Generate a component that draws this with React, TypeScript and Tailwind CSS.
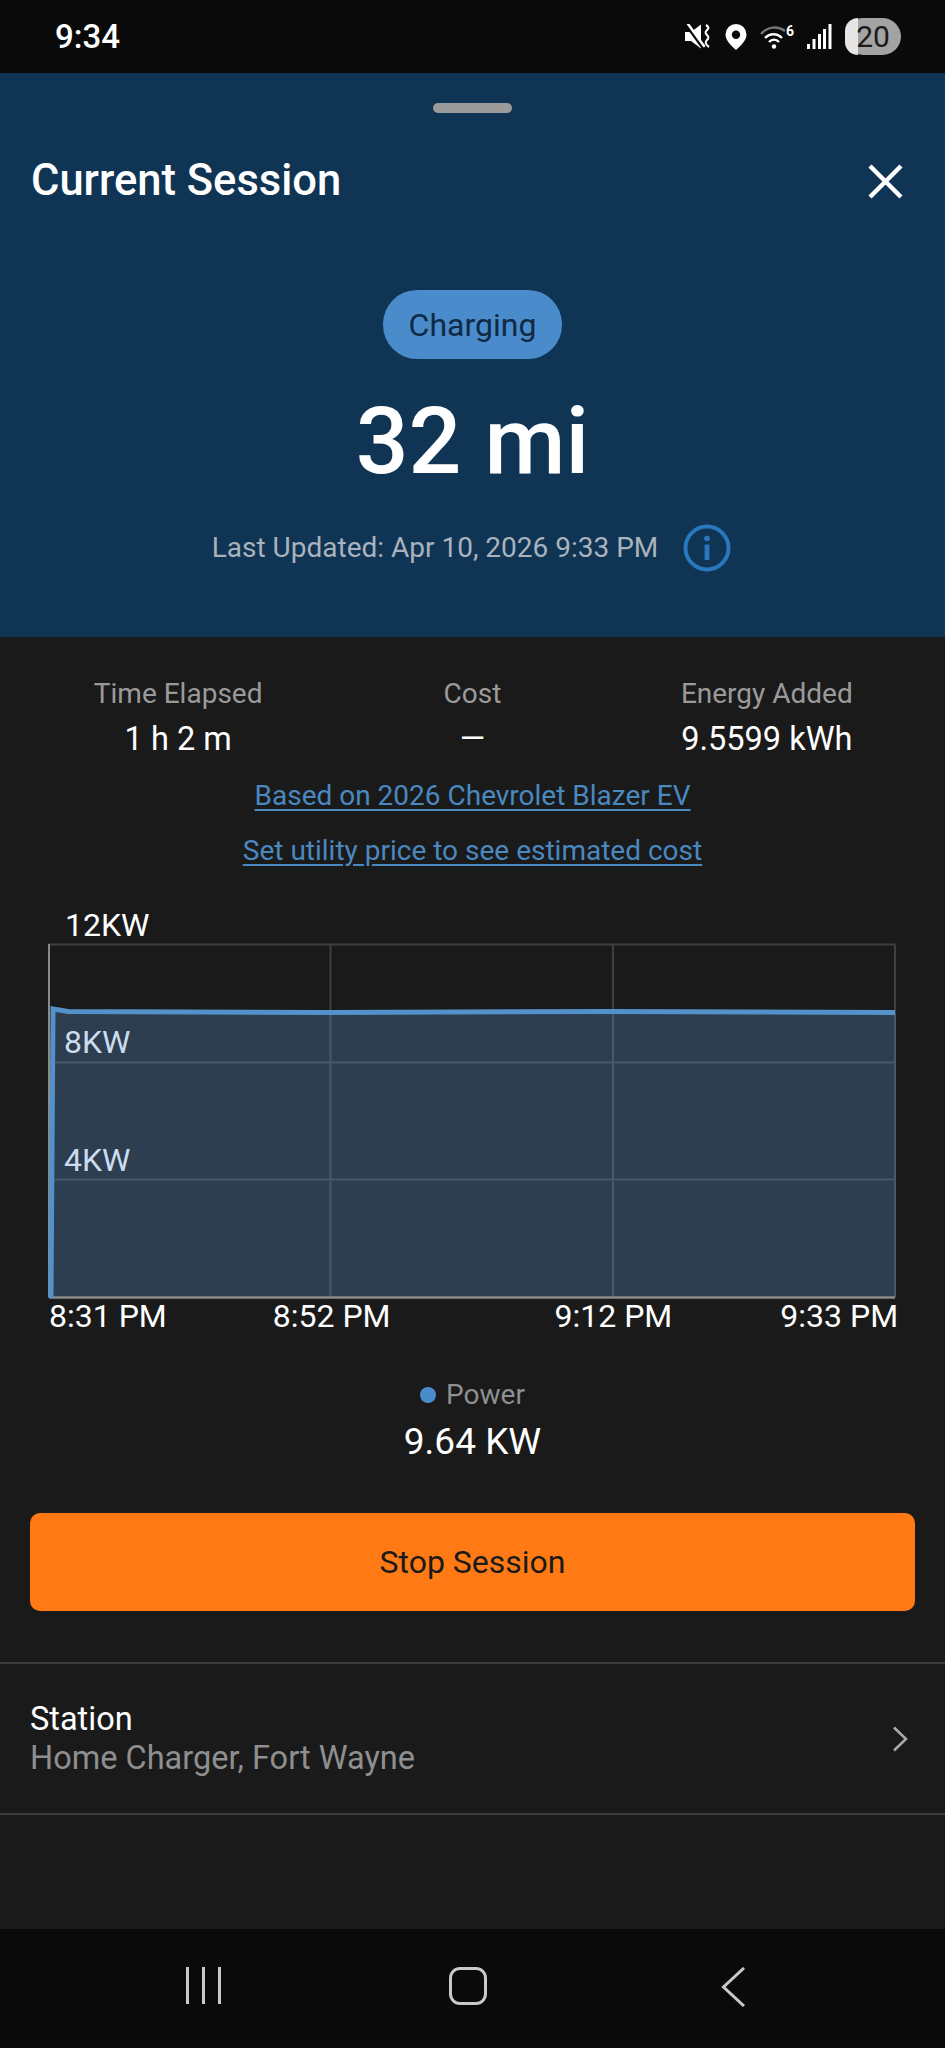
function MuteIcon() {
  return (
    <svg width="27" height="25" viewBox="0 0 27 25" fill="none">
      <path d="M0 8h6l10-7.500v24L6 17H0z" fill="#fff" />
      <path d="M1 1l16 22" stroke="#0a0a0a" strokeWidth="2.500" />
      <path d="M3 0l16 22" stroke="#fff" strokeWidth="2.400" strokeLinecap="round" />
      <path d="M21 1c3 2 3 3 1 5s-2 3 0 5 2 3 0 5-2 4 2 7" stroke="#fff" strokeWidth="2.200" />
    </svg>
  );
}

function PinIcon() {
  return (
    <svg width="22" height="26" viewBox="0 0 22 26">
      <path fillRule="evenodd" d="M11 0a10.500 10.500 0 0 1 10.500 10.500c0 6-5.500 11-10.500 15.500C6 21.500.5 16.500.5 10.500A10.500 10.500 0 0 1 11 0zm0 6.500a4.200 4.200 0 1 0 0 8.400 4.200 4.200 0 0 0 0-8.400z" fill="#fff" />
    </svg>
  );
}

function WifiIcon() {
  return (
    <div className="relative w-[34px] h-[24px]">
      <svg width="28" height="24" viewBox="0 0 28 24" fill="none">
        <path d="M1 9C8 1 18 1 25 6" stroke="#777" strokeWidth="2.400" />
        <path d="M5 13c5-5 12-5 17 0" stroke="#fff" strokeWidth="2.400" />
        <path d="M9 17c3-3 7-3 10 0" stroke="#fff" strokeWidth="2.400" />
        <circle cx="14" cy="21.500" r="2.200" fill="#fff" />
      </svg>
      <span className="absolute right-0 top-[-1px] text-[14px] font-bold leading-[14px]">6</span>
    </div>
  );
}

function SignalIcon() {
  return (
    <svg width="25" height="25" viewBox="0 0 25 25" fill="#fff">
      <rect x="0" y="20" width="3" height="5" />
      <rect x="5.500" y="15" width="3" height="10" />
      <rect x="11" y="10" width="3" height="15" />
      <rect x="16" y="5" width="3" height="20" />
      <rect x="21.500" y="0" width="3" height="25" />
    </svg>
  );
}

function InfoIcon() {
  return (
    <svg width="48" height="48" viewBox="0 0 48 48" fill="none">
      <circle cx="24" cy="24" r="21.500" stroke="#2a77bd" strokeWidth="4" />
      <circle cx="24" cy="14.500" r="2.800" fill="#2a77bd" />
      <rect x="21.600" y="20.500" width="4.800" height="15.500" fill="#2a77bd" />
    </svg>
  );
}

function PowerChart() {
  return (
    <svg width="848" height="356" viewBox="0 0 848 356" fill="none" className="block">
      <path d="M3 67 L20 69 L280 70 L560 69 L847 70 V354 H3 Z" fill="#2c3e50" />
      <path d="M0.500 1.500H847M282.500 1.500V354M565 1.500V354M847 1.500V354" stroke="#3f3f3f" strokeWidth="2" />
      <path d="M282.500 70V354M565 70V354M847 70V354M1 119.500H847M1 236.500H847" stroke="#465869" strokeWidth="2" />
      <path d="M1 1V354" stroke="#8a8a8a" strokeWidth="2" />
      <path d="M1 354.500H847" stroke="#8a8a8a" strokeWidth="2.500" />
      <path d="M3 355 L5 66 L20 68.500 L280 69.500 L560 68.500 L847 69.500" stroke="#5291c9" strokeWidth="5" />
    </svg>
  );
}

export default function App() {
  return (
    <div className="w-[945px] h-[2048px] flex flex-col bg-[#1a1a1a] font-['Roboto',sans-serif] text-white overflow-hidden">
      {/* status bar */}
      <div className="h-[73px] shrink-0 bg-[#0a0a0a] flex items-center justify-between pl-[55px] pr-[44px]">
        <span className="text-[33px] font-medium leading-none">9:34</span>
        <div className="flex items-center gap-[13px]">
          <MuteIcon />
          <PinIcon />
          <WifiIcon />
          <SignalIcon />
          <div className="relative w-[56px] h-[37px] rounded-full bg-[#a3a3a3] flex items-center justify-center">
            <div className="absolute left-0 top-0 bottom-0 w-[13px] rounded-l-full bg-[#e6e6e6]" />
            <span className="relative text-[30px] leading-none text-[#1a1a1a]">20</span>
          </div>
        </div>
      </div>

      {/* header */}
      <div className="h-[564px] shrink-0 bg-[#0f3454] flex flex-col items-center">
        <div className="w-[79px] h-[10px] mt-[30px] rounded-full bg-[#9b9b9b]" />
        <div className="w-full flex items-center justify-between pl-[31px] pr-[42px] mt-[38px] h-[60px]">
          <h1 className="text-[43.500px] font-medium leading-none">Current Session</h1>
          <svg width="35" height="35" viewBox="0 0 35 35" fill="none">
            <path d="M2 2l31 31M33 2 2 33" stroke="#fff" strokeWidth="4.500" />
          </svg>
        </div>
        <div className="mt-[79px] h-[69px] w-[179px] rounded-[34px] bg-[#4a8ccb] flex items-center justify-center text-[32px] text-[#0f2a44]">
          Charging
        </div>
        <div className="mt-[27px] text-[93px] font-medium leading-[112px]">32 mi</div>
        <div className="mt-[26px] flex items-center gap-[25px] mr-[2px]">
          <span className="text-[28px] text-[#a9b3bd] leading-none">Last Updated: Apr 10, 2026 9:33 PM</span>
          <InfoIcon />
        </div>
      </div>

      {/* stats */}
      <div className="grid grid-cols-3 px-[31px] mt-[39px] text-center">
        <div>
          <div className="text-[28px] leading-[36px] text-[#9a9a9a]">Time Elapsed</div>
          <div className="text-[32.500px] leading-[40px] mt-[7px]">1 h 2 m</div>
        </div>
        <div>
          <div className="text-[28px] leading-[36px] text-[#9a9a9a]">Cost</div>
          <div className="text-[32.500px] leading-[40px] mt-[7px]">—</div>
        </div>
        <div>
          <div className="text-[28px] leading-[36px] text-[#9a9a9a]">Energy Added</div>
          <div className="text-[32.500px] leading-[40px] mt-[7px]">9.5599 kWh</div>
        </div>
      </div>

      <div className="flex flex-col items-center mt-[20px] gap-[21px] text-[28px] leading-[34px] text-[#4a88c0] underline underline-offset-4">
        <span>Based on 2026 Chevrolet Blazer EV</span>
        <span>Set utility price to see estimated cost</span>
      </div>

      {/* chart */}
      <div className="relative ml-[48px] mt-[75px] w-[848px]">
        <div className="absolute left-[17px] top-[-36px] text-[32px] leading-[36px]">12KW</div>
        <PowerChart />
        <div className="absolute left-[16px] top-[81px] text-[32px] leading-[36px] text-[#cbdcee]">8KW</div>
        <div className="absolute left-[16px] top-[199px] text-[32px] leading-[36px] text-[#cbdcee]">4KW</div>
        <div className="flex text-[32px] leading-[36px] mt-[-1px] pl-[1px] whitespace-nowrap">
          <span>8:31 PM</span>
          <span className="ml-[106px]">8:52 PM</span>
          <span className="ml-[164px]">9:12 PM</span>
          <span className="ml-[108px]">9:33 PM</span>
        </div>
      </div>

      <div className="flex flex-col items-center mt-[43px]">
        <div className="flex items-center gap-[10px] text-[28px] leading-[36px] text-[#8f8f8f]">
          <span className="w-[16px] h-[16px] rounded-full bg-[#4a8ccb]" />
          Power
        </div>
        <div className="text-[37px] leading-[44px] mt-[7px]">9.64 KW</div>
      </div>

      <button className="mx-[30px] mt-[49px] h-[98px] shrink-0 rounded-[10px] bg-[#ff7a14] text-[32px] text-[#1a1a1a]">
        Stop Session
      </button>

      {/* station row */}
      <div className="mt-[51px] h-[153px] shrink-0 border-y-2 border-[#3d3d3d] flex items-center justify-between pl-[30px] pr-[37px]">
        <div>
          <div className="text-[32.500px] leading-[39px]">Station</div>
          <div className="text-[32.500px] leading-[39px] text-[#8f8f8f]">Home Charger, Fort Wayne</div>
        </div>
        <svg width="16" height="26" viewBox="0 0 16 26" fill="none">
          <path d="M2 1.500 14 13 2 24.500" stroke="#aaa" strokeWidth="2.500" />
        </svg>
      </div>

      <div className="flex-1" />

      {/* nav bar */}
      <div className="h-[119px] shrink-0 bg-[#0a0a0a] flex items-start pt-[38px]">
        <div className="ml-[186px] flex gap-[13px]">
          <span className="w-[3px] h-[37px] bg-[#c9c9c9]" />
          <span className="w-[3px] h-[37px] bg-[#c9c9c9]" />
          <span className="w-[3px] h-[37px] bg-[#c9c9c9]" />
        </div>
        <div className="ml-[228px] w-[38px] h-[38px] rounded-[11px] border-[3px] border-[#c9c9c9]" />
        <svg width="24" height="40" viewBox="0 0 24 40" fill="none" className="ml-[234px]">
          <path d="M23 1 2.500 20 23 39" stroke="#c9c9c9" strokeWidth="3" />
        </svg>
      </div>
    </div>
  );
}
